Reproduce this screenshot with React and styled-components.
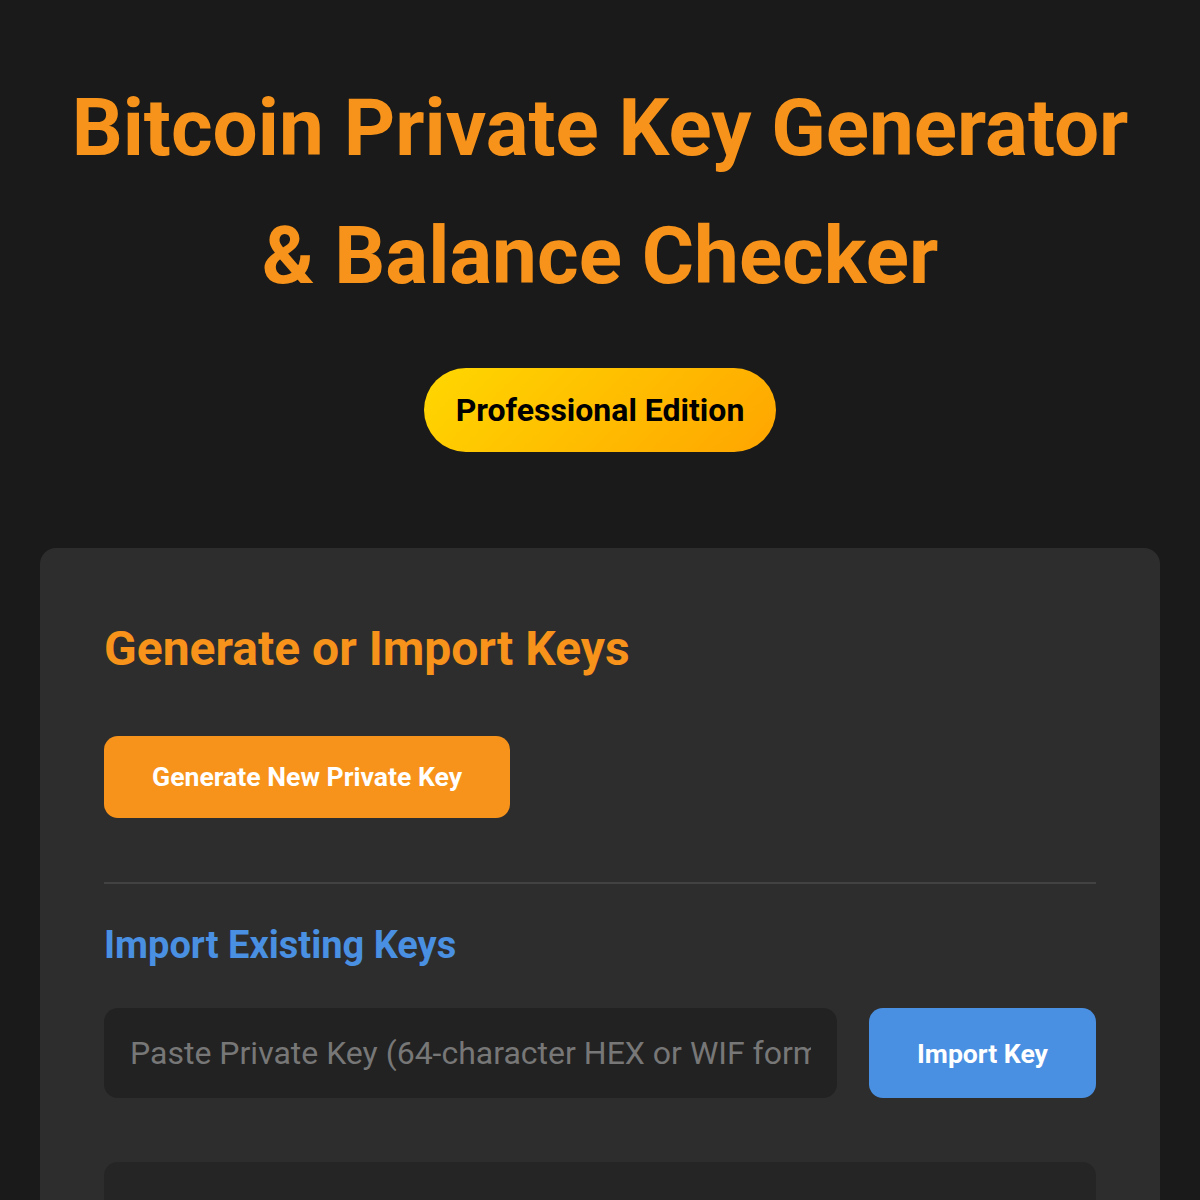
import React, { useState } from 'react';
import styled, { createGlobalStyle } from 'styled-components';

const GlobalStyle = createGlobalStyle`
  body {
    margin: 0;
    background: #1a1a1a;
    font-family: Roboto, "Liberation Sans", sans-serif;
    color: #e0e0e0;
  }
  * { box-sizing: border-box; }
`;

const Page = styled.div`
  padding: 64px 40px 40px;
`;

const Header = styled.header`
  display: flex;
  flex-direction: column;
  align-items: center;
  text-align: center;
`;

const Title = styled.h1`
  margin: 0;
  font-size: 80px;
  line-height: 128px;
  font-weight: 700;
  color: #f7931a;
`;

const Badge = styled.div`
  margin-top: 48px;
  padding: 18px 32px;
  border-radius: 42px;
  background: linear-gradient(135deg, #ffd700, #ffa500);
  color: #000;
  font-size: 32px;
  line-height: 48px;
  font-weight: 700;
`;

const Card = styled.section`
  margin-top: 96px;
  background: #2d2d2d;
  border-radius: 16px;
  padding: 72px 64px 64px;
`;

const Heading = styled.h2`
  margin: 0;
  font-size: ${p => p.$size}px;
  line-height: 1.2;
  font-weight: 700;
  color: ${p => p.$color};
`;

const Button = styled.button`
  border: none;
  border-radius: 14px;
  background: ${p => p.$bg};
  color: #fff;
  font-family: Roboto, "Liberation Sans", sans-serif;
  font-size: 26.6px;
  font-weight: 700;
  padding: 0 48px;
  height: ${p => p.$h}px;
  cursor: pointer;
`;

const Actions = styled.div`
  margin-top: 58px;
`;

const Divider = styled.hr`
  border: none;
  border-top: 2px solid #424242;
  margin: 64px 0 39px;
`;

const ImportRow = styled.div`
  margin-top: 40px;
  display: flex;
  gap: 32px;
`;

const KeyInput = styled.input`
  flex: 1;
  min-width: 0;
  height: 90px;
  border: none;
  border-radius: 14px;
  background: #222;
  color: #eee;
  padding: 0 26px;
  font-family: Roboto, "Liberation Sans", sans-serif;
  font-size: 32px;
  outline: none;
  &::placeholder { color: #777; }
`;

const ResultBox = styled.div`
  margin-top: 64px;
  background: #252525;
  border-radius: 14px;
  min-height: 200px;
`;

export default function App() {
  const [key, setKey] = useState('');
  return (
    <>
      <GlobalStyle />
      <Page>
        <Header>
          <Title>
            Bitcoin Private Key Generator
            <br />
            &amp; Balance Checker
          </Title>
          <Badge>Professional Edition</Badge>
        </Header>
        <Card>
          <Heading $size={48} $color="#f7931a">Generate or Import Keys</Heading>
          <Actions>
            <Button $bg="#f7931a" $h={82}>Generate New Private Key</Button>
          </Actions>
          <Divider />
          <Heading $size={38} $color="#4a90e2">Import Existing Keys</Heading>
          <ImportRow>
            <KeyInput
              value={key}
              onChange={e => setKey(e.target.value)}
              placeholder="Paste Private Key (64-character HEX or WIF format)"
            />
            <Button $bg="#4a90e2" $h={90}>Import Key</Button>
          </ImportRow>
          <ResultBox />
        </Card>
      </Page>
    </>
  );
}
